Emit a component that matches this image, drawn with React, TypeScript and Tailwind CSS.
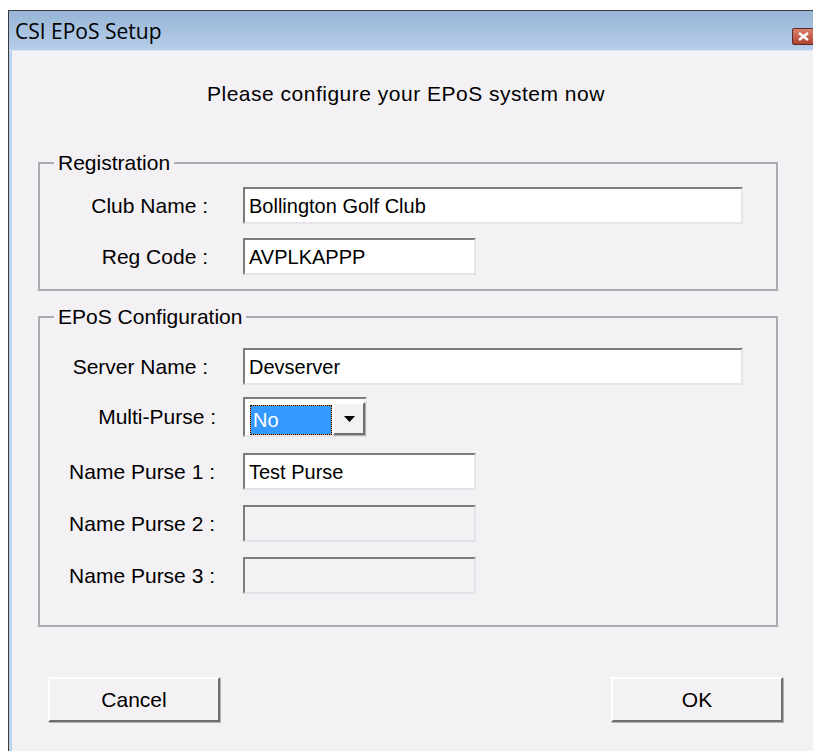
import type { ReactNode } from 'react';

const sunken =
  'border-2 border-t-[#7c7c7c] border-l-[#7c7c7c] border-r-[#e6e4e8] border-b-[#e6e4e8]';
const raised =
  'border-2 border-t-white border-l-white border-r-[#6f6f6f] border-b-[#6f6f6f] shadow-[1px_1px_0_#b3b1b6]';

function TextBox({ width, value, disabled }: { width: string; value?: string; disabled?: boolean }) {
  return (
    <div
      className={`${width} h-[37px] ${sunken} ${disabled ? 'bg-[#f4f1f5]' : 'bg-white'} flex items-center pl-[4px] text-[20px] leading-none`}
    >
      {value}
    </div>
  );
}

function Row({ label, pad, mt, children }: { label: string; pad: string; mt: string; children: ReactNode }) {
  return (
    <div className={`flex items-center ${mt}`}>
      <span className={`w-[176px] text-right ${pad}`}>{label}</span>
      <div className="ml-[27px]">{children}</div>
    </div>
  );
}

function Combo() {
  return (
    <div className={`w-[124px] h-[40px] ${sunken} bg-white flex items-end pl-[5px]`}>
      <div className="w-[82px] h-[30px] bg-[#e89a34] border border-dotted border-black">
        <div className="h-full bg-[#3399ff] text-white text-[20px] flex items-center pl-[2px]">No</div>
      </div>
      <div className={`w-[32px] h-[33px] ml-[1px] ${raised} bg-[#f4f1f5] flex items-center justify-center`}>
        <svg width="11" height="6" viewBox="0 0 11 6">
          <path d="M0 0h11L5.5 6z" fill="#000" />
        </svg>
      </div>
    </div>
  );
}

function Button({ children }: { children: ReactNode }) {
  return (
    <div className={`w-[172px] h-[45px] ${raised} bg-[#f4f1f5] flex items-center justify-center`}>
      {children}
    </div>
  );
}

export default function App() {
  return (
    <div className="w-[813px] h-[751px] overflow-hidden bg-white pt-[10px] pl-[8px] font-['Liberation_Sans',Arial,sans-serif] text-[21px] leading-[24px] text-black">
      <div className="h-full border-l border-t border-[#3a3a3a] flex flex-col">
        {/* caption bar */}
        <div className="h-[40px] shrink-0 bg-gradient-to-b from-[#98b5d6] to-[#b6cee9] border-b border-[#dde7f3] flex items-start justify-between pl-[6px]">
          <span className="self-center font-['Open_Sans',sans-serif] text-[21px]">CSI EPoS Setup</span>
          <div className="mt-[17px] -mr-[2px] w-[23px] h-[17px] rounded-[2px] border border-[#5b2c2c] bg-gradient-to-b from-[#d9806c] to-[#b2432f] flex items-center justify-center">
            <svg width="11" height="9" viewBox="0 0 11 9">
              <path d="M1 1l9 7M10 1L1 8" stroke="#fff" strokeWidth="2.4" />
            </svg>
          </div>
        </div>

        <div className="flex-1 border-l-[3px] border-[#bcd1ea] bg-[#f4f1f5] pt-[31px]">
          <p className="pl-[195px] tracking-[0.5px]">Please configure your EPoS system now</p>

          <fieldset className="mt-[47px] ml-[26px] w-[740px] border-2 border-[#aeabb0] pb-[14px]">
            <legend className="ml-[14px] px-[4px] leading-[20px]">Registration</legend>
            <Row label="Club Name :" pad="pr-[8px]" mt="mt-[14px]">
              <TextBox width="w-[500px]" value="Bollington Golf Club" />
            </Row>
            <Row label="Reg Code :" pad="pr-[8px]" mt="mt-[14px]">
              <TextBox width="w-[233px]" value="AVPLKAPPP" />
            </Row>
          </fieldset>

          <fieldset className="mt-[16px] ml-[26px] w-[740px] border-2 border-[#aeabb0] pb-[31px]">
            <legend className="ml-[14px] px-[4px] leading-[20px]">EPoS Configuration</legend>
            <Row label="Server Name :" pad="pr-[8px]" mt="mt-[21px]">
              <TextBox width="w-[500px]" value="Devserver" />
            </Row>
            <Row label="Multi-Purse :" pad="pr-0" mt="mt-[12px]">
              <Combo />
            </Row>
            <Row label="Name Purse 1 :" pad="pr-[1px]" mt="mt-[16px]">
              <TextBox width="w-[233px]" value="Test Purse" />
            </Row>
            <Row label="Name Purse 2 :" pad="pr-[1px]" mt="mt-[15px]">
              <TextBox width="w-[233px]" disabled />
            </Row>
            <Row label="Name Purse 3 :" pad="pr-[1px]" mt="mt-[15px]">
              <TextBox width="w-[233px]" disabled />
            </Row>
          </fieldset>

          <div className="mt-[50px] flex justify-between pl-[36px] pr-[30px]">
            <Button>Cancel</Button>
            <Button>OK</Button>
          </div>
        </div>
      </div>
    </div>
  );
}
